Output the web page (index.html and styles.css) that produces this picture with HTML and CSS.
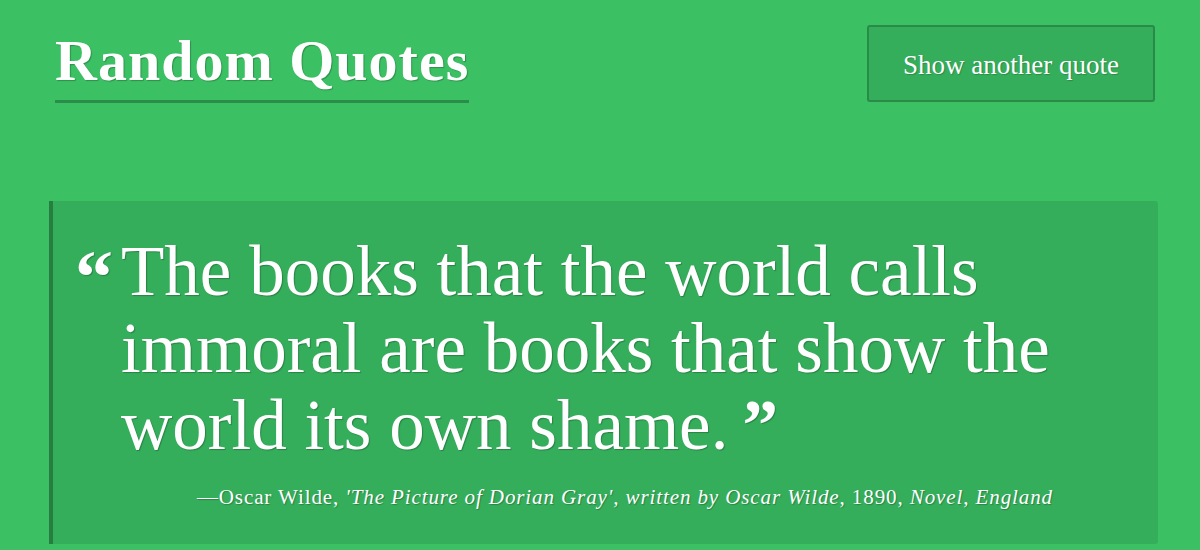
FILE: index.html
```html
<!DOCTYPE html>
<html lang="en">
<head>
<meta charset="utf-8">
<title>Random Quotes</title>
<link rel="stylesheet" href="styles.css">
</head>
<body>
<header class="top">
  <h1 class="brand">Random Quotes</h1>
  <button class="next-btn" type="button">Show another quote</button>
</header>
<main class="quote-card">
  <span class="open-mark">&ldquo;</span>
  <div class="quote-body">
    <p class="quote-text">The books that the world calls immoral are books that show the world its own shame.</p>
    <p class="cite">&mdash;Oscar Wilde, <em>'The Picture of Dorian Gray', written by Oscar Wilde</em>, 1890, <em>Novel</em>, <em>England</em></p>
  </div>
</main>
</body>
</html>
```

FILE: styles.css
```css
* { box-sizing: border-box; }
html, body { height: 100%; }
body {
  margin: 0;
  background: #3bc163;
  color: #fff;
  font-family: "Liberation Serif", "Times New Roman", serif;
  overflow: hidden;
}
.top {
  display: flex;
  justify-content: space-between;
  align-items: flex-start;
  padding: 25px 45px 0 55px;
}
.brand {
  margin: 0;
  font-size: 58px;
  letter-spacing: 1px;
  font-weight: bold;
  line-height: 72px;
  padding-bottom: 3px;
  border-bottom: 3px solid #2b8d4a;
  text-shadow: 1px 1px 1px rgba(0,0,0,0.25);
}
.next-btn {
  width: 288px;
  height: 77px;
  background: #35ae5b;
  border: 2px solid #2a8a47;
  border-radius: 3px;
  color: #fff;
  font-family: inherit;
  font-size: 27px;
  text-shadow: 1px 1px 1px rgba(0,0,0,0.2);
  padding: 4px 0 0;
}
.quote-card {
  display: flex;
  margin: 98px 42px 0 49px;
  height: 343px;
  background: #35ae5b;
  border-left: 4px solid #267f40;
  border-radius: 0 3px 3px 0;
  padding: 32px 40px 0 22px;
  text-shadow: 1px 1px 1px rgba(0,0,0,0.25);
}
.open-mark {
  font-size: 76px;
  font-weight: bold;
  line-height: 1;
  width: 46px;
  flex: none;
  margin-top: 6px;
}
.quote-body { flex: 1; }
.quote-text {
  margin: 0;
  font-size: 71px;
  line-height: 77px;
}
.quote-text::after {
  content: "\201D";
  font-weight: bold;
  margin-left: 14px;
}
.cite {
  margin: 21px 65px 0 0;
  text-align: right;
  font-size: 21px;
  letter-spacing: 0.9px;
}
```
